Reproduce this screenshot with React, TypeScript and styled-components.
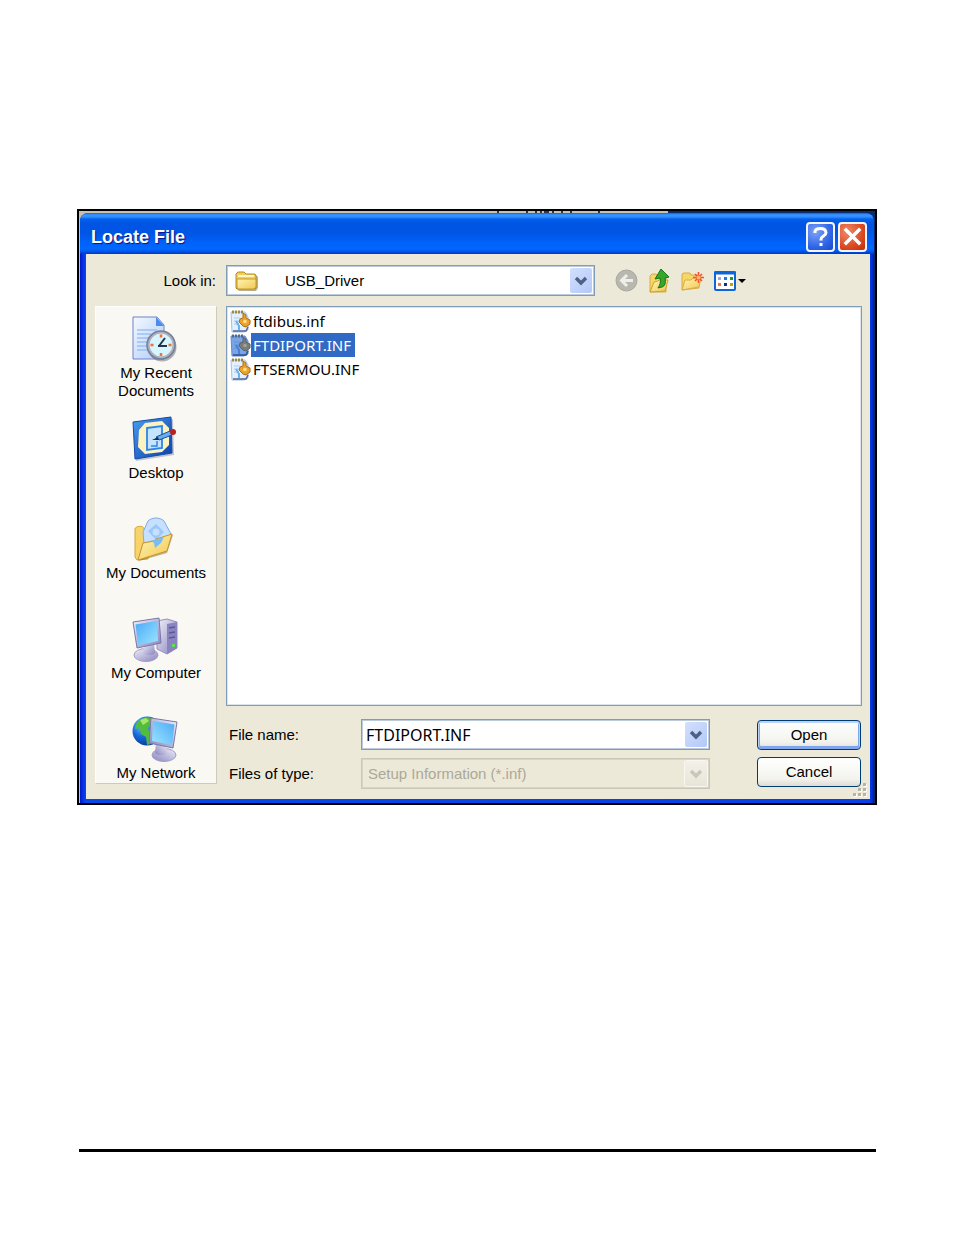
import React, { useState } from "react";
import styled, { createGlobalStyle, css } from "styled-components";

const GlobalStyle = createGlobalStyle`
  * { box-sizing: border-box; }
  body { margin: 0; background: #fff; }
  button, input, select { font: inherit; color: inherit; margin: 0; }
`;

const Page = styled.div`
  min-height: 100vh;
  display: flex;
  flex-direction: column;
  padding: 209px 77px 83px;
  font: 15px/18px "Liberation Sans", Arial, sans-serif;
  color: #000;
`;

const Screen = styled.main`
  border: 2px solid #000;
  padding: 2px 1px 0;
  position: relative;
  background: linear-gradient(to right, #c6c2b2 0 74%, #0b2c6c 74%);
`;

const BackdropMarks = styled.svg`
  position: absolute;
  top: 0;
  left: 50%;
  width: 130px;
  height: 2px;
`;

const PageRule = styled.hr`
  width: 100%;
  height: 3px;
  margin: auto 0 0;
  border: solid #fff;
  border-width: 0 1px 0 2px;
  background: #000;
`;

const Dialog = styled.section`
  padding: 0 4px 4px 6px;
  border-radius: 8px 8px 0 0;
  background: linear-gradient(to right, #0018c4 0, #0a30e8 3px, #0848e6 6px, #0a40e4 calc(100% - 5px), #0030dc calc(100% - 2px), #001a90 100%);
`;

const TitleBar = styled.header`
  display: flex;
  align-items: center;
  gap: 3px;
  height: 41px;
  margin: 0 -4px 0 -6px;
  padding: 6px 7px 0 11px;
  border-radius: 8px 8px 0 0;
  background: linear-gradient(
    to bottom,
    #1464e6 0, #3c96ff 2px, #2f8cfc 4px, #0560ec 6px, #0054e3 11px,
    #0055e5 20px, #0062fb 30px, #0068ff 36px, #0058ee 38px, #0038c0 41px
  );
`;

const Title = styled.h1`
  flex: 1;
  margin: 0;
  font-size: 18px;
  line-height: 24px;
  font-weight: 700;
  color: #fff;
  text-shadow: 1px 1px 1px #0a1883;
`;

const CaptionButton = styled.button<{ $danger?: boolean }>`
  display: grid;
  place-items: center;
  width: 29px;
  height: 30px;
  padding: 0;
  border: 2px solid #f4f6ff;
  border-radius: 4px;
  background: ${(p) =>
    p.$danger
      ? "radial-gradient(circle at 30% 30%, #ee8a68, #dc4a22 60%, #c02c08)"
      : "radial-gradient(circle at 30% 30%, #7ea2f6, #3166e6 60%, #1c48cc)"};
`;

const Body = styled.div`
  padding: 11px 8px 15px 9px;
  position: relative;
  background: #ece9d8;
`;

const LookRow = styled.div`
  display: flex;
  align-items: center;
  margin-bottom: 10px;
`;

const LookLabel = styled.label`
  flex: none;
  width: 131px;
  padding-right: 10px;
  text-align: right;
`;

const Combo = styled.div<{ $look?: boolean; $disabled?: boolean }>`
  display: flex;
  align-items: center;
  height: 31px;
  padding: 2px;
  border: 1px solid #7f9db9;
  box-shadow: inset 0 0 0 1px #bccbdb;
  background: #fff;
  ${(p) => p.$look && css`
    flex: 0 1 369px;
    padding-left: 8px;
  `}
  ${(p) => p.$disabled && css`
    border-color: #c9c7ba;
    box-shadow: inset 0 0 0 1px #d8d5c7;
    background: #ece9d8;
    color: #aca899;
  `}
`;

const fieldStyle = css<{ $indent: number }>`
  flex: 1;
  min-width: 0;
  height: 25px;
  padding: 0 0 0 ${(p) => p.$indent}px;
  border: 0;
  outline: 0;
  background: transparent;
  appearance: none;
`;

const ComboSelect = styled.select<{ $indent: number }>`
  ${fieldStyle}
  &:disabled { color: #aca899; opacity: 1; }
`;

const ComboInput = styled.input<{ $indent: number }>`
  ${fieldStyle}
  font-family: "Noto Sans", sans-serif;
  font-size: 16px;
`;

const Arrow = styled.span<{ $disabled?: boolean }>`
  flex: none;
  display: grid;
  place-items: center;
  width: 22px;
  height: 25px;
  border-radius: 2px;
  pointer-events: none;
  color: ${(p) => (p.$disabled ? "#c9c7ba" : "#4d6185")};
  background: ${(p) =>
    p.$disabled
      ? "linear-gradient(#f3f1e8, #e8e5d8)"
      : "linear-gradient(135deg, #d3dffd, #b3c8f8)"};
  ${(p) => p.$disabled && "box-shadow: 0 0 0 1px #f8f7f2;"}
`;

const Tools = styled.div`
  display: flex;
  gap: 9px;
  margin-left: 19px;
`;

const ToolButton = styled.button<{ $wide?: boolean }>`
  display: grid;
  place-items: center;
  width: ${(p) => (p.$wide ? 34 : 24)}px;
  height: 26px;
  padding: 0;
  border: 0;
  background: none;
`;

const Columns = styled.div`
  display: grid;
  grid-template-columns: 122px minmax(0, 1fr);
  column-gap: 9px;
`;

const Places = styled.nav`
  padding-top: 8px;
  height: 478px;
  border: 1px solid #fff;
  border-right-color: #cdcabb;
  border-bottom-color: #cdcabb;
  background: #f9f8f3;
`;

const Place = styled.a`
  display: flex;
  flex-direction: column;
  align-items: center;
  gap: 1px;
  height: 100px;
  color: #000;
  text-align: center;
  text-decoration: none;
  white-space: pre-line;
  &:last-child { height: 68px; }
`;

const FileList = styled.ul`
  height: 400px;
  margin: 0 0 13px;
  padding: 2px;
  list-style: none;
  border: 1px solid #7f9db9;
  box-shadow: inset 0 0 0 1px #dbe4ec;
  background: #fff;
`;

const FileButton = styled.button<{ $selected: boolean }>`
  display: flex;
  align-items: center;
  height: 24px;
  padding: 0 0 0 1px;
  border: 0;
  background: none;
  font-family: "Noto Sans", sans-serif;
  line-height: 24px;
  color: ${(p) => (p.$selected ? "#fff" : "#000")};
  span {
    padding: 0 4px 0 2px;
    background: ${(p) => (p.$selected ? "#316ac5" : "transparent")};
  }
`;

const Form = styled.form`
  display: grid;
  grid-template-columns: minmax(0, 1fr) 104px;
  column-gap: 47px;
  padding-right: 1px;
`;

const Fields = styled.div`
  display: grid;
  grid-template-columns: 135px minmax(0, 1fr);
  row-gap: 8px;
  align-items: center;
`;

const Actions = styled.div`
  display: grid;
  grid-auto-rows: 30px;
  row-gap: 7px;
  padding-top: 1px;
`;

const PushButton = styled.button<{ $primary?: boolean }>`
  padding: 0;
  border: 1px solid #003c74;
  border-radius: 4px;
  background: linear-gradient(#fff, #f3f3ee 75%, #dedbd0);
  ${(p) => p.$primary && "box-shadow: inset 0 1px 0 1px #bcd2fa, inset 0 -1px 0 2px #7fa5ee;"}
`;

const FormArea = styled.div`
  margin-bottom: -5px;
`;

const Grip = styled.svg`
  position: absolute;
  right: 2px;
  bottom: 1px;
`;

const FieldLabel = styled.label`
  padding-left: 3px;
`;

const Chevron = () => (
  <svg width="14" height="10" viewBox="0 0 14 10" aria-hidden="true">
    <path d="M2 2 7 7 12 2" fill="none" stroke="currentColor" strokeWidth="3.400" />
  </svg>
);

const Defs = () => (
  <svg width="0" height="0" style={{ position: "absolute" }} aria-hidden="true">
    <defs>
      <linearGradient id="folder" x1="0" y1="0" x2="1" y2="1">
        <stop offset="0" stopColor="#fff6b8" /><stop offset="1" stopColor="#f2c64e" />
      </linearGradient>
      <linearGradient id="paper" x1="0" y1="0" x2="1" y2="1">
        <stop offset="0" stopColor="#f4f9ff" /><stop offset="1" stopColor="#aecbf8" />
      </linearGradient>
      <linearGradient id="glass" x1="0" y1="0" x2="1" y2="1">
        <stop offset="0" stopColor="#4ba9f5" /><stop offset="1" stopColor="#9be6ff" />
      </linearGradient>
      <linearGradient id="casing" x1="0" y1="0" x2="1" y2="1">
        <stop offset="0" stopColor="#f0effa" /><stop offset="1" stopColor="#8783bd" />
      </linearGradient>
      <linearGradient id="desk" x1="0" y1="0" x2="1" y2="1">
        <stop offset="0" stopColor="#4a9cf0" /><stop offset="1" stopColor="#0c3fa8" />
      </linearGradient>
      <radialGradient id="globe" cx=".35" cy=".3" r=".8">
        <stop offset="0" stopColor="#6fc8ff" /><stop offset=".5" stopColor="#1668d8" /><stop offset="1" stopColor="#06308c" />
      </radialGradient>
    </defs>
  </svg>
);

const PlaceSvg = ({ children }: { children: React.ReactNode }) => (
  <svg width="48" height="48" viewBox="2 0 48 48" aria-hidden="true">{children}</svg>
);

const RecentIcon = () => (
  <PlaceSvg>
    <path d="M3 2h24l7 8v34H3z" fill="url(#paper)" stroke="#6d83cc" />
    <path d="M26 2v9h8z" fill="#4a8cec" />
    <path d="M7 15h20M7 19h14M7 23h12M7 27h11M7 31h11M7 35h13" stroke="#9cc0f4" strokeWidth="1.500" />
    <circle cx="32" cy="32" r="14.500" fill="#63687a" opacity=".5" />
    <circle cx="31" cy="30" r="14" fill="#a9b1c2" stroke="#777f93" strokeWidth="1.500" />
    <circle cx="31" cy="30" r="11" fill="#d6f5ff" stroke="#e6eef4" />
    <path d="m29 31 6-8M28 31h9" stroke="#26334a" strokeWidth="2" />
    <path d="M31 19.500v3M31 38v3M20.500 30h3M38.500 30h3" stroke="#ee7332" strokeWidth="2.500" />
  </PlaceSvg>
);

const DesktopIcon = () => (
  <PlaceSvg>
    <path d="m5 9 38-5 1 36-38 6z" fill="#55608a" opacity=".35" />
    <path d="m3 7 38-5 1 36-37 6z" fill="url(#desk)" stroke="#174ba8" />
    <path d="m15 8 17-2 7 7v17l-7 7-17 2-7-7 1-17z" fill="#fdf3c2" />
    <path d="m17 13 15-2v22l-15 2z" fill="#c5e5ff" stroke="#2c85e6" strokeWidth="1.800" />
    <path d="m26 22 14-6 2 4-13 5z" fill="#66aef0" stroke="#164f9c" />
    <path d="m22 25 6-3 1 3z" fill="#1b2c50" />
    <circle cx="43" cy="17" r="3" fill="#b8231c" />
    <path d="M27 26v5h-6" fill="none" stroke="#2c85e6" strokeWidth="1.500" />
  </PlaceSvg>
);

const DocumentsIcon = () => (
  <PlaceSvg>
    <path d="M5 14c0-3 9-4 9 0l4 1v29L7 45 5 42z" fill="#f7d469" stroke="#d5a540" />
    <path d="M13 17 18 6c4-4 12-4 16 0l7 13-9 13-18-3z" fill="#c6e0ff" stroke="#7fa9e6" />
    <path d="m18 16 8-7 8 8-8 8z" fill="#9bc8fb" />
    <circle cx="26" cy="17" r="3.500" fill="#c6e0ff" />
    <path d="m13 28 30-8-6 18L9 46z" fill="#8a6a24" opacity=".5" />
    <path d="m13 28 11-2 2-2 16-5-5 17-29 9z" fill="url(#folder)" stroke="#c9922a" />
    <path d="m21 26 13-4-3 6-6 5-1-5z" fill="#7bbcf4" />
  </PlaceSvg>
);

const Monitor = () => (
  <>
    <ellipse cx="15" cy="38" rx="12" ry="6.500" fill="url(#casing)" stroke="#a19dc6" />
    <path d="m13 27 10-1 1 10c-3 3-9 3-12 0z" fill="url(#casing)" />
    <path d="m2 5 26-4 2 25-24 5z" fill="url(#casing)" stroke="#7b77a8" />
    <path d="m4.500 7.500 21.500-3.500 1 20-20 4z" fill="url(#glass)" />
  </>
);

const ComputerIcon = () => (
  <PlaceSvg>
    <path d="m27 6 10-2 10 3v26l-10 6-10-5z" fill="url(#casing)" stroke="#9490c0" />
    <path d="m37 9 10-2v26l-10 6z" fill="#8984c0" />
    <path d="m39 13 6-1M39 18l6-1M39 23l6-1" stroke="#5d5998" strokeWidth="1.500" />
    <rect x="42" y="29" width="3" height="3" fill="#5fe04f" />
    <g transform="translate(1 2)"><Monitor /></g>
  </PlaceSvg>
);

const NetworkIcon = () => (
  <PlaceSvg>
    <circle cx="17" cy="16" r="14.500" fill="url(#globe)" />
    <path d="M7 7c5-5 14-6 18-2l-3 6-5 1 2 4 6 3-4 10-4 1-1-8-5-3-1-6-5 1z" fill="#52bd3a" />
    <path d="m10 5 6-2 3 3-6 4z" fill="#a5e66c" />
    <g transform="matrix(-1 0 0 1 49 2)"><Monitor /></g>
  </PlaceSvg>
);

const ClosedFolder = () => (
  <svg width="24" height="22" viewBox="0 0 24 22" aria-hidden="true">
    <path d="M2 19V5l2-2h6l2 2h9l2 2v11l-2 3H4z" fill="#8b7b4a" opacity=".6" />
    <path d="M1 18V4l2-2h6l2 2h9l1 2v12l-1 1H2z" fill="#f3cf57" stroke="#b68a22" />
    <path d="M2 9h19v8l-2 2H3l-1-2z" fill="url(#folder)" stroke="#c79a2c" />
    <path d="M3 6h16" stroke="#fff7c8" strokeWidth="2" />
  </svg>
);

const BackIcon = () => (
  <svg width="23" height="23" viewBox="0 0 23 23" aria-hidden="true">
    <circle cx="11.500" cy="11.500" r="10.500" fill="#b9b8b0" stroke="#a9a8a0" />
    <path d="M18 11.500H7M12 6l-5.500 5.500L12 17" fill="none" stroke="#efeee8" strokeWidth="3" />
  </svg>
);

const UpIcon = () => (
  <svg width="24" height="26" viewBox="0 0 24 26" aria-hidden="true">
    <path d="M3 24V8l2-2h4l2 2h8v16z" fill="#f6d765" stroke="#d8ac44" />
    <path d="m3 24 4-10 4-1 1-1h9l-3 11z" fill="url(#folder)" stroke="#cfa035" />
    <path d="m14 1 8 8-4 1c1 5 0 8-3 9l-4 1c2-3 3-6 2-10l-5 1z" fill="#35a82c" stroke="#167218" />
  </svg>
);

const NewFolderIcon = () => (
  <svg width="24" height="26" viewBox="0 0 24 26" aria-hidden="true">
    <path d="M2 22V6l2-1h6l1 2h8v13z" fill="#f6d765" stroke="#d8ac44" />
    <path d="m2 22 3-10h6l2-2h8l-2 9z" fill="url(#folder)" stroke="#d8ac44" />
    <path d="M18.500 4v11M13 9.500h11M15 6l7 7M22 6l-7 7" stroke="#f2552c" strokeWidth="1.600" />
    <circle cx="18.500" cy="9.500" r="2" fill="#ffb070" />
  </svg>
);

const ViewsIcon = () => (
  <svg width="34" height="22" viewBox="0 0 34 22" aria-hidden="true">
    <rect x="2" y="2" width="20" height="18" rx="1" fill="#fff" stroke="#0c66d8" strokeWidth="2" />
    <path d="M1 3h22" stroke="#0c66d8" strokeWidth="3" />
    <path d="M5 7h3v3H5z" fill="#a9a2d4" /><path d="M11 7h3v3h-3z" fill="#2476e0" /><path d="M17 7h3v3h-3z" fill="#2a9230" />
    <path d="M5 13h3v3H5z" fill="#f4704a" /><path d="M11 13h3v3h-3z" fill="#122e94" /><path d="M17 13h3v3h-3z" fill="#c4a01a" />
    <path d="M25 9h8l-4 4z" fill="#000" />
  </svg>
);

const InfIcon = ({ selected }: { selected: boolean }) => (
  <svg width="21" height="24" viewBox="0 0 21 24" aria-hidden="true">
    <path d="M1 3h14l3 5v13l-4 2H2z" fill={selected ? "#78a5e6" : "#e4f0fd"} stroke={selected ? "#5f8cd6" : "#a5bfe6"} />
    <path d="M3 22h13l2-4" fill="none" stroke={selected ? "#2f4f92" : "#4e679b"} strokeWidth="1.500" />
    <path d="M2 3h12" stroke={selected ? "#556a80" : "#9c8a42"} strokeWidth="3" strokeDasharray="2 1" />
    <path d="M4 9h6M4 12h5M4 15h5" stroke={selected ? "#6794db" : "#a9c8f2"} />
    <path d="m6 12 3 5v4" stroke={selected ? "#4a7fd2" : "#68b4ec"} strokeWidth="2" fill="none" />
    <path d="m13 4 3 2v3l4 2v4l-4 3-3-1-4-4 1-3 3-1z" fill={selected ? "#7b7c76" : "#eda32a"} stroke={selected ? "#59646f" : "#a96d14"} />
    <circle cx="15" cy="12.500" r="1.800" fill={selected ? "#9da29d" : "#ffe08a"} />
  </svg>
);

const places = [
  { label: "My Recent\nDocuments", icon: <RecentIcon /> },
  { label: "Desktop", icon: <DesktopIcon /> },
  { label: "My Documents", icon: <DocumentsIcon /> },
  { label: "My Computer", icon: <ComputerIcon /> },
  { label: "My Network", icon: <NetworkIcon /> },
];

const files = ["ftdibus.inf", "FTDIPORT.INF", "FTSERMOU.INF"];

export default function App() {
  const [name, setName] = useState("FTDIPORT.INF");
  return (
    <Page>
      <GlobalStyle />
      <Defs />
      <Screen>
        <BackdropMarks viewBox="0 0 130 2" aria-hidden="true">
          <path d="M20 1h2M49 1h2M58 1h2M63 1h2M67 1h5M75 1h2M84 1h2M93 1h2M121 1h2" stroke="#2a3550" strokeWidth="2" />
        </BackdropMarks>
        <Dialog aria-label="Locate File">
          <TitleBar>
            <Title>Locate File</Title>
            <CaptionButton type="button" aria-label="Help">
              <svg width="17" height="22" viewBox="0 0 17 22" aria-hidden="true">
                <path d="M3 7V5.500Q3.500 2.500 8.500 2.500T14 6.500Q14 8.500 11.500 10T9 13.500v1" fill="none" stroke="#fff" strokeWidth="3" />
                <path d="M7.500 17h3v3h-3z" fill="#fff" />
              </svg>
            </CaptionButton>
            <CaptionButton type="button" $danger aria-label="Close">
              <svg width="19" height="19" viewBox="0 0 19 19" aria-hidden="true">
                <path d="m3 3 13 13M16 3 3 16" stroke="#fff" strokeWidth="3.400" strokeLinecap="square" />
              </svg>
            </CaptionButton>
          </TitleBar>
          <Body>
            <LookRow>
              <LookLabel htmlFor="look">Look in:</LookLabel>
              <Combo $look>
                <ClosedFolder />
                <ComboSelect id="look" $indent={26}>
                  <option>USB_Driver</option>
                </ComboSelect>
                <Arrow><Chevron /></Arrow>
              </Combo>
              <Tools>
                <ToolButton type="button" aria-label="Back"><BackIcon /></ToolButton>
                <ToolButton type="button" aria-label="Up one level"><UpIcon /></ToolButton>
                <ToolButton type="button" aria-label="New folder"><NewFolderIcon /></ToolButton>
                <ToolButton type="button" $wide aria-label="Views"><ViewsIcon /></ToolButton>
              </Tools>
            </LookRow>
            <Columns>
              <Places>
                {places.map((p) => (
                  <Place href="#" key={p.label}>
                    {p.icon}
                    <span>{p.label}</span>
                  </Place>
                ))}
              </Places>
              <FormArea>
                <FileList>
                  {files.map((f) => (
                    <li key={f}>
                      <FileButton type="button" $selected={f === name} onClick={() => setName(f)}>
                        <InfIcon selected={f === name} />
                        <span>{f}</span>
                      </FileButton>
                    </li>
                  ))}
                </FileList>
                <Form onSubmit={(e) => e.preventDefault()}>
                  <Fields>
                    <FieldLabel htmlFor="name">File name:</FieldLabel>
                    <Combo>
                      <ComboInput id="name" $indent={2} value={name} onChange={(e) => setName(e.target.value)} />
                      <Arrow><Chevron /></Arrow>
                    </Combo>
                    <FieldLabel htmlFor="type">Files of type:</FieldLabel>
                    <Combo $disabled>
                      <ComboSelect id="type" $indent={4} disabled>
                        <option>Setup Information (*.inf)</option>
                      </ComboSelect>
                      <Arrow $disabled><Chevron /></Arrow>
                    </Combo>
                  </Fields>
                  <Actions>
                    <PushButton type="submit" $primary>Open</PushButton>
                    <PushButton type="button">Cancel</PushButton>
                  </Actions>
                </Form>
              </FormArea>
            </Columns>
            <Grip width="16" height="16" viewBox="0 0 16 16" aria-hidden="true">
              <path d="M12 2h3v3h-3zM7 7h3v3H7zM12 7h3v3h-3zM2 12h3v3H2zM7 12h3v3H7zM12 12h3v3h-3z" fill="#fff" />
              <path d="M11 1h3v3h-3zM6 6h3v3H6zM11 6h3v3h-3zM1 11h3v3H1zM6 11h3v3H6zM11 11h3v3h-3z" fill="#b8b4a2" />
            </Grip>
          </Body>
        </Dialog>
      </Screen>
      <PageRule />
    </Page>
  );
}
